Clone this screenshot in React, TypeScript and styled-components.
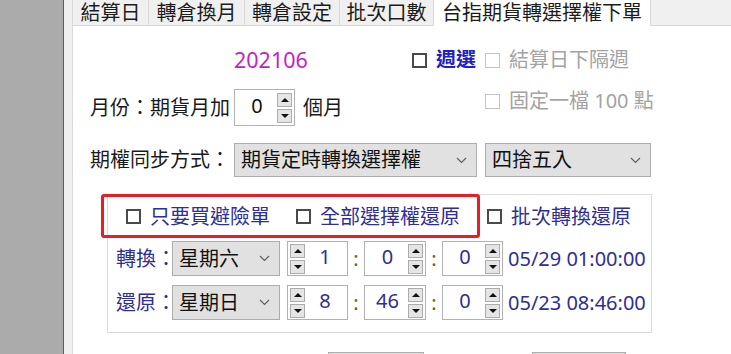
import styled, { createGlobalStyle } from "styled-components";

const GlobalStyle = createGlobalStyle`
  html, body {
    margin: 0;
    padding: 0;
    background: #fff;
    overflow: hidden;
  }
  body {
    font-family: "Noto Sans", "Noto Sans CJK TC", sans-serif;
    font-size: 20px;
    color: #1a1a1a;
  }
`;

type Tone = "blue" | "navy" | "disabled";

const toneColor: Record<Tone, string> = {
    blue: "#1f1fc4",
    navy: "#2e2e96",
    disabled: "#a3a3a3",
};

function CheckItem(props: { label: string; tone: Tone; bold?: boolean }) {
    return (
        <Check>
            <CheckBox $disabled={props.tone === "disabled"} />
            <CheckText $tone={props.tone} $bold={props.bold}>{props.label}</CheckText>
        </Check>
    );
}

function Spinner(props: { value: string; w: number; h: number; left?: boolean; color?: string }) {
    return (
        <SpinBox $w={props.w} $h={props.h} $left={props.left}>
            <SpinButtons>
                <SpinButton><Arrow $up /></SpinButton>
                <SpinButton><Arrow /></SpinButton>
            </SpinButtons>
            <SpinValue $color={props.color || "#111"}>{props.value}</SpinValue>
        </SpinBox>
    );
}

function Dropdown(props: { value: string; w: number; h: number }) {
    return (
        <Select $w={props.w} $h={props.h}>
            <span>{props.value}</span>
            <svg width="11" height="7" viewBox="0 0 11 7">
                <polyline points="1,1 5.5,5.5 10,1" fill="none" stroke="#606060" strokeWidth="1.2" />
            </svg>
        </Select>
    );
}

// tab captions with their measured widths
const tabs = [
    { label: "結算日", w: 76 },
    { label: "轉倉換月", w: 96 },
    { label: "轉倉設定", w: 95 },
    { label: "批次口數", w: 94 },
];

function App() {
    return (
        <Page>
            <GlobalStyle />
            <SidePane />
            <Gutter />
            <Main>
                <TabBar>
                    {tabs.map((t) => (
                        <Tab key={t.label} $w={t.w}>{t.label}</Tab>
                    ))}
                    <Tab $w={218} $active>台指期貨轉選擇權下單</Tab>
                    <TabFiller />
                </TabBar>
                <TabPage>
                    <TopSection>
                        <Row $h={30}>
                            <Cell $w={144} />
                            <Cell $w={178}>
                                <MonthText>202106</MonthText>
                            </Cell>
                            <Cell $w={73}>
                                <CheckItem label="週選" tone="blue" bold />
                            </Cell>
                            <CheckItem label="結算日下隔週" tone="disabled" />
                        </Row>
                        <Row $h={37} $mt={14}>
                            <Cell $w={144}>
                                <Label>月份：期貨月加</Label>
                            </Cell>
                            <Cell $w={251}>
                                <Spinner value="0" w={61} h={37} />
                                <Label $ml={8}>個月</Label>
                            </Cell>
                            <TopAligned>
                                <CheckItem label="固定一檔 100 點" tone="disabled" />
                            </TopAligned>
                        </Row>
                        <Row $h={34} $mt={17}>
                            <Cell $w={144}>
                                <Label>期權同步方式：</Label>
                            </Cell>
                            <Dropdown value="期貨定時轉換選擇權" w={243} h={34} />
                            <Gap $w={8} />
                            <Dropdown value="四捨五入" w={166} h={34} />
                        </Row>
                    </TopSection>

                    <GroupBox>
                        <Highlight />
                        <CheckRow>
                            <Cell $w={170}>
                                <CheckItem label="只要買避險單" tone="navy" />
                            </Cell>
                            <Cell $w={191}>
                                <CheckItem label="全部選擇權還原" tone="navy" />
                            </Cell>
                            <CheckItem label="批次轉換還原" tone="navy" />
                        </CheckRow>
                        <TimeRow>
                            <Cell $w={56}>
                                <NavyLabel>轉換：</NavyLabel>
                            </Cell>
                            <Dropdown value="星期六" w={108} h={35} />
                            <Gap $w={7} />
                            <Spinner value="1" w={61} h={35} left color="#2e2e96" />
                            <Colon>:</Colon>
                            <Spinner value="0" w={62} h={35} color="#2e2e96" />
                            <Colon>:</Colon>
                            <Spinner value="0" w={61} h={35} color="#2e2e96" />
                            <Stamp>05/29 01:00:00</Stamp>
                        </TimeRow>
                        <TimeRow $mt={9}>
                            <Cell $w={56}>
                                <NavyLabel>還原：</NavyLabel>
                            </Cell>
                            <Dropdown value="星期日" w={108} h={35} />
                            <Gap $w={7} />
                            <Spinner value="8" w={61} h={35} left color="#2e2e96" />
                            <Colon>:</Colon>
                            <Spinner value="46" w={62} h={35} color="#2e2e96" />
                            <Colon>:</Colon>
                            <Spinner value="0" w={61} h={35} color="#2e2e96" />
                            <Stamp>05/23 08:46:00</Stamp>
                        </TimeRow>
                    </GroupBox>

                    <ButtonRow>
                        <Button $w={96} />
                        <Button $w={94} />
                    </ButtonRow>
                </TabPage>
            </Main>
        </Page>
    );
}

const Page = styled.div`
display: flex;
height: 354px;
width: 731px;
overflow: hidden;
`;

const SidePane = styled.div`
width: 63px;
flex-shrink: 0;
background: #ababab;
border-right: 1px solid #5e5e5e;
`;

const Gutter = styled.div`
width: 8px;
flex-shrink: 0;
background: #f0f0f0;
`;

const Main = styled.div`
flex: 1;
display: flex;
flex-direction: column;
min-width: 0;
`;

const TabBar = styled.div`
display: flex;
height: 26px;
flex-shrink: 0;
`;

const Tab = styled.div<{ $w: number; $active?: boolean }>`
width: ${(p) => p.$w}px;
height: 100%;
flex-shrink: 0;
box-sizing: border-box;
display: flex;
align-items: center;
justify-content: center;
font-size: 20px;
line-height: 1;
color: #1c1c1c;
white-space: nowrap;
background: ${(p) => (p.$active ? "#fff" : "#f0f0f0")};
border-left: 1px solid #d9d9d9;
border-bottom: ${(p) => (p.$active ? "none" : "1px solid #d9d9d9")};
${(p) => p.$active && "border-right: 1px solid #d9d9d9;"}
`;

const TabFiller = styled.div`
flex: 1;
background: #f0f0f0;
border-bottom: 1px solid #d9d9d9;
`;

const TabPage = styled.div`
flex: 1;
background: #fff;
border-left: 1px solid #d9d9d9;
padding-top: 19px;
`;

const TopSection = styled.div`
padding-left: 17px;
`;

const Row = styled.div<{ $h: number; $mt?: number }>`
display: flex;
align-items: center;
height: ${(p) => p.$h}px;
margin-top: ${(p) => p.$mt || 0}px;
`;

const Cell = styled.div<{ $w: number }>`
display: flex;
align-items: center;
width: ${(p) => p.$w}px;
flex-shrink: 0;
height: 100%;
`;

const Gap = styled.div<{ $w: number }>`
width: ${(p) => p.$w}px;
flex-shrink: 0;
`;

const TopAligned = styled.div`
align-self: flex-start;
display: flex;
align-items: center;
height: 24px;
`;

const MonthText = styled.span`
color: #c61ec6;
font-size: 21.5px;
line-height: 1;
`;

const Label = styled.span<{ $ml?: number }>`
color: #1a1a1a;
font-size: 20px;
line-height: 1;
white-space: nowrap;
margin-left: ${(p) => p.$ml || 0}px;
`;

const NavyLabel = styled(Label)`
color: #2e2e96;
`;

const Check = styled.label`
display: flex;
align-items: center;
white-space: nowrap;
`;

const CheckBox = styled.span<{ $disabled?: boolean }>`
width: 15px;
height: 15px;
box-sizing: border-box;
border: ${(p) => (p.$disabled ? "1px solid #c4c4c4" : "2px solid #4a4a4a")};
background: #fff;
margin-right: 9px;
flex-shrink: 0;
`;

const CheckText = styled.span<{ $tone: Tone; $bold?: boolean }>`
color: ${(p) => toneColor[p.$tone]};
font-weight: ${(p) => (p.$bold ? 700 : 400)};
font-size: 20px;
line-height: 1;
`;

const SpinBox = styled.div<{ $w: number; $h: number; $left?: boolean }>`
display: flex;
flex-direction: ${(p) => (p.$left ? "row" : "row-reverse")};
align-items: center;
width: ${(p) => p.$w}px;
height: ${(p) => p.$h}px;
flex-shrink: 0;
box-sizing: border-box;
border: 1px solid #b2b2b2;
background: #fff;
padding: 0 2px;
`;

const SpinButtons = styled.div`
display: flex;
flex-direction: column;
gap: 2px;
width: 15px;
`;

const SpinButton = styled.div`
height: 14px;
box-sizing: border-box;
background: #e5e5e5;
border: 1px solid #acacac;
display: flex;
align-items: center;
justify-content: center;
`;

const Arrow = styled.span<{ $up?: boolean }>`
width: 0;
height: 0;
border-left: 4px solid transparent;
border-right: 4px solid transparent;
${(p) => (p.$up ? "border-bottom: 4px solid #111;" : "border-top: 4px solid #111;")}
`;

const SpinValue = styled.span<{ $color: string }>`
flex: 1;
text-align: center;
color: ${(p) => p.$color};
font-size: 20px;
line-height: 1;
margin-top: -4px;
`;

const Select = styled.div<{ $w: number; $h: number }>`
display: flex;
align-items: center;
justify-content: space-between;
width: ${(p) => p.$w}px;
height: ${(p) => p.$h}px;
flex-shrink: 0;
box-sizing: border-box;
background: #e1e1e1;
border: 1px solid #adadad;
padding: 0 9px 0 6px;
font-size: 20px;
line-height: 1;
color: #111;
white-space: nowrap;
`;

const GroupBox = styled.div`
position: relative;
margin: 17px 0 0 34px;
width: 545px;
height: 139px;
box-sizing: border-box;
border: 1px solid #dcdcdc;
`;

const Highlight = styled.div`
position: absolute;
left: -7px;
top: -1px;
width: 379px;
height: 44px;
box-sizing: border-box;
border: 3px solid #ec1c24;
border-radius: 3px;
pointer-events: none;
`;

const CheckRow = styled.div`
display: flex;
align-items: center;
height: 43px;
padding-left: 18px;
margin-bottom: 3px;
`;

const TimeRow = styled.div<{ $mt?: number }>`
display: flex;
align-items: center;
height: 35px;
padding-left: 8px;
margin-top: ${(p) => p.$mt || 0}px;
`;

const Colon = styled.span`
width: 16px;
flex-shrink: 0;
text-align: center;
color: #7a5c10;
font-size: 20px;
line-height: 1;
`;

const Stamp = styled.span`
margin-left: 5px;
color: #2e2e96;
font-size: 20px;
line-height: 1;
white-space: nowrap;
`;

const ButtonRow = styled.div`
display: flex;
gap: 108px;
margin: 19px 0 0 255px;
`;

const Button = styled.div<{ $w: number }>`
width: ${(p) => p.$w}px;
height: 30px;
box-sizing: border-box;
background: #e1e1e1;
border: 1px solid #adadad;
`;

export default App;
